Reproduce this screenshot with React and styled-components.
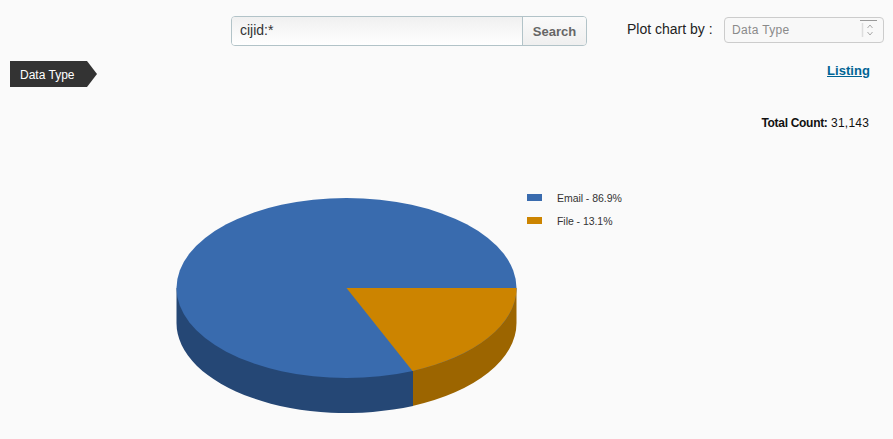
import React from "react";
import styled, { createGlobalStyle } from "styled-components";

const Global = createGlobalStyle`
  html, body { margin: 0; padding: 0; background: #fafafa; }
  body { font-family: "Liberation Sans", Arial, sans-serif; color: #111; overflow: hidden; }
`;
const Page = styled.div`
  width: 893px; height: 439px; background: #fafafa; overflow: hidden;
`;
const Toolbar = styled.div`
  display: flex; align-items: center; height: 30px;
  padding: 16px 0 0 231px;
`;
const SearchBox = styled.div`
  display: flex; width: 356px; height: 30px; box-sizing: border-box;
  border: 1px solid #b2c3c8; border-radius: 4px; overflow: hidden;
`;
const SearchInput = styled.div`
  flex: 1; padding: 0 8px; font-size: 14px; line-height: 26px; color: #333;
  background: linear-gradient(#f0f0f0, #ffffff);
  border-right: 1px solid #b2c3c8;
`;
const SearchButton = styled.div`
  width: 63px; text-align: center; font-size: 13px; font-weight: bold; line-height: 29px;
  color: #666; background: linear-gradient(#fafafa, #efefef);
`;
const PlotLabel = styled.span`
  margin-left: 40px; width: 97px; font-size: 14px; color: #222; position: relative; top: -2px;
`;
const Select = styled.div`
  position: relative; width: 160px; height: 26px; box-sizing: border-box; margin-top: -3px;
  border: 1px solid #ccc; border-radius: 4px; background: #f8f8f8;
  font-size: 12px; letter-spacing: 0.35px; line-height: 24px; color: #8a8a8a; padding-left: 7px;
`;
const Stepper = styled.svg`
  position: absolute; right: 3px; top: 2px;
`;
const SubRow = styled.div`
  display: flex; justify-content: space-between; align-items: flex-start;
  padding: 15px 23px 0 10px;
`;
const Tag = styled.div`
  width: 87px; height: 26px; box-sizing: border-box; padding-left: 10px;
  background: #333; color: #fff; font-size: 12px; line-height: 28px;
  clip-path: polygon(0 0, 77px 0, 87px 13px, 77px 26px, 0 26px);
`;
const ListingLink = styled.a`
  font-size: 13px; font-weight: bold; color: #006494; text-decoration: underline;
  letter-spacing: 0.05px; line-height: 20px; margin-top: 0;
`;
const TotalRow = styled.div`
  text-align: right; padding: 28px 24px 0 0; font-size: 12px; line-height: 16px; color: #111;
  letter-spacing: 0.2px;
  b { letter-spacing: -0.3px; }
`;
const Chart = styled.svg`
  display: block; margin-top: 30px;
`;
const LegendText = styled.text`
  font-size: 10.5px; fill: #333; letter-spacing: -0.05px; font-family: "Liberation Sans", Arial, sans-serif;
`;

/* ellipse centre (346.5,127) in chart coords: chart starts at y=161 */
const cx = 346.5, cy = 127, rx = 170, ry = 90, depth = 35;
const wx = 412.5, wy = 210;

export default function App() {
  return (
    <Page>
      <Global />
      <Toolbar>
        <SearchBox>
          <SearchInput>cijid:*</SearchInput>
          <SearchButton>Search</SearchButton>
        </SearchBox>
        <PlotLabel>Plot chart by :</PlotLabel>
        <Select>
          Data Type
          <Stepper width="20" height="20" viewBox="0 0 20 20">
            <path d="M0 0.5H17" stroke="#999" fill="none" />
            <path d="M2.5 3V17" stroke="#ddd" strokeWidth="1.5" fill="none" />
            <path d="M7.5 8L10 5L12.5 8M7.5 12L10 15L12.5 12" stroke="#aaa" fill="none" />
          </Stepper>
        </Select>
      </Toolbar>
      <SubRow>
        <Tag>Data Type</Tag>
        <ListingLink href="#">Listing</ListingLink>
      </SubRow>
      <TotalRow><b>Total Count:</b> 31,143</TotalRow>
      <Chart width="893" height="278" viewBox="0 0 893 278">
        <path d={`M${wx} ${wy}V${wy + depth}A${rx} ${ry} 0 0 0 ${cx + rx} ${cy + depth}V${cy}Z`} fill="#9c6500" />
        <path d={`M${cx - rx} ${cy}V${cy + depth}A${rx} ${ry} 0 0 0 ${wx + 0.5} ${wy + depth - 0.1}V${wy}Z`} fill="#254775" />
        <ellipse cx={cx} cy={cy} rx={rx} ry={ry} fill="#396bae" />
        <path d={`M${cx} ${cy}H${cx + rx}A${rx} ${ry} 0 0 1 ${wx} ${wy}Z`} fill="#cc8400" />
        <rect x="527" y="33" width="15" height="7" fill="#396bae" />
        <rect x="527" y="56" width="15" height="7" fill="#cc8400" />
        <LegendText x="557" y="41">Email - 86.9%</LegendText>
        <LegendText x="557" y="64">File - 13.1%</LegendText>
      </Chart>
    </Page>
  );
}
